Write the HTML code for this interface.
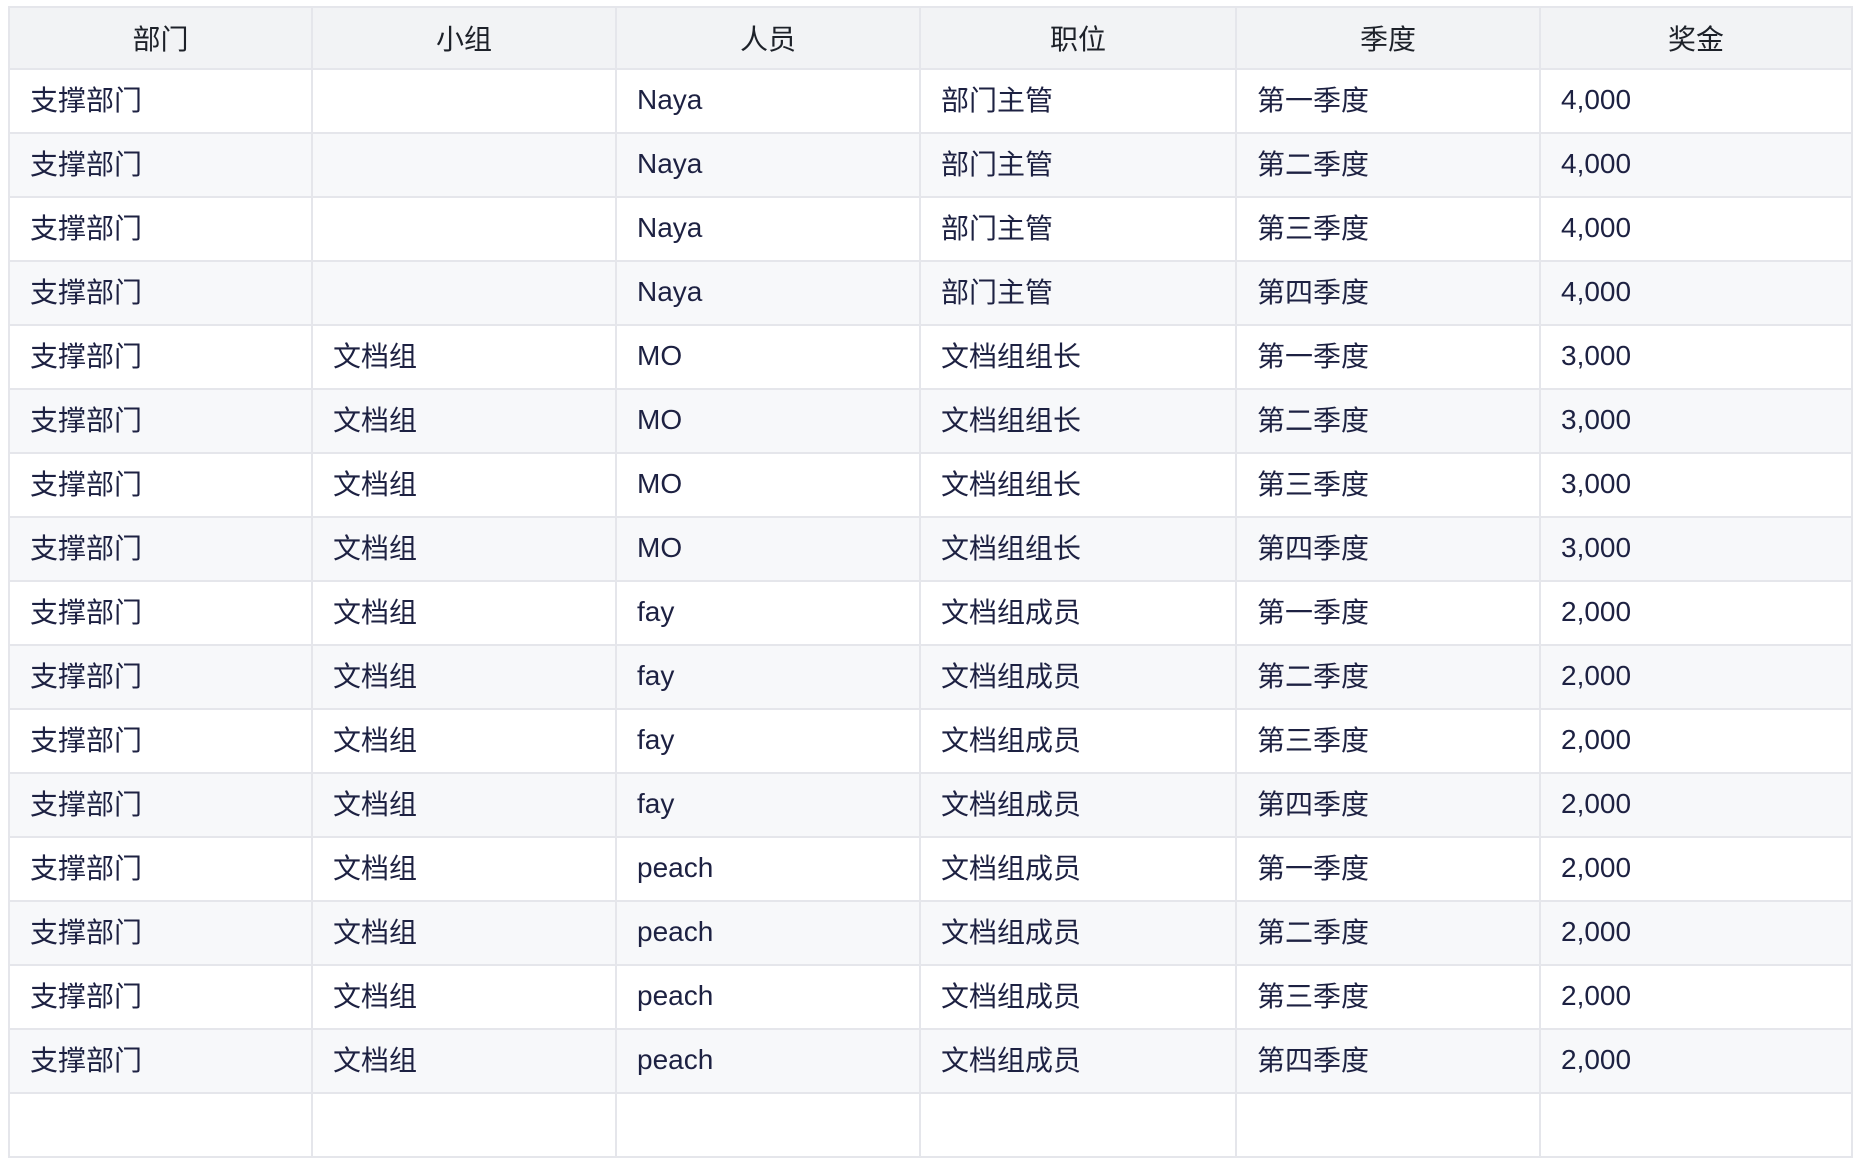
<!DOCTYPE html>
<html><head><meta charset="utf-8"><style>
html,body{margin:0;padding:0;background:#fff;width:1859px;height:1100px;overflow:hidden}
table{position:absolute;left:8px;top:6px;border-collapse:collapse;table-layout:fixed;width:1843px;
font-family:"Liberation Sans","Noto Sans CJK SC",sans-serif;font-size:28px;color:#1d2142}
td,th{border:2px solid #e5e6eb;padding:0 0 0 20px;height:62px;text-align:left;font-weight:normal;white-space:nowrap;overflow:hidden;line-height:1}
th{background:#f2f3f5;text-align:center;padding:3px 0 0 0;height:57px;color:#1d2129}
td.l{padding-top:0;padding-bottom:3px;height:59px;font-size:28px}
tr:nth-child(even) td{background:#f7f8fa}
tr:nth-child(odd) td{background:#fff}
</style></head><body>
<table>
<colgroup><col style="width:303px"><col style="width:304px"><col style="width:304px"><col style="width:316px"><col style="width:304px"><col style="width:312px"></colgroup>
<thead><tr><th>部门</th><th>小组</th><th>人员</th><th>职位</th><th>季度</th><th>奖金</th></tr></thead>
<tbody>
<tr><td>支撑部门</td><td></td><td class="l">Naya</td><td>部门主管</td><td>第一季度</td><td class="l">4,000</td></tr>
<tr><td>支撑部门</td><td></td><td class="l">Naya</td><td>部门主管</td><td>第二季度</td><td class="l">4,000</td></tr>
<tr><td>支撑部门</td><td></td><td class="l">Naya</td><td>部门主管</td><td>第三季度</td><td class="l">4,000</td></tr>
<tr><td>支撑部门</td><td></td><td class="l">Naya</td><td>部门主管</td><td>第四季度</td><td class="l">4,000</td></tr>
<tr><td>支撑部门</td><td>文档组</td><td class="l">MO</td><td>文档组组长</td><td>第一季度</td><td class="l">3,000</td></tr>
<tr><td>支撑部门</td><td>文档组</td><td class="l">MO</td><td>文档组组长</td><td>第二季度</td><td class="l">3,000</td></tr>
<tr><td>支撑部门</td><td>文档组</td><td class="l">MO</td><td>文档组组长</td><td>第三季度</td><td class="l">3,000</td></tr>
<tr><td>支撑部门</td><td>文档组</td><td class="l">MO</td><td>文档组组长</td><td>第四季度</td><td class="l">3,000</td></tr>
<tr><td>支撑部门</td><td>文档组</td><td class="l">fay</td><td>文档组成员</td><td>第一季度</td><td class="l">2,000</td></tr>
<tr><td>支撑部门</td><td>文档组</td><td class="l">fay</td><td>文档组成员</td><td>第二季度</td><td class="l">2,000</td></tr>
<tr><td>支撑部门</td><td>文档组</td><td class="l">fay</td><td>文档组成员</td><td>第三季度</td><td class="l">2,000</td></tr>
<tr><td>支撑部门</td><td>文档组</td><td class="l">fay</td><td>文档组成员</td><td>第四季度</td><td class="l">2,000</td></tr>
<tr><td>支撑部门</td><td>文档组</td><td class="l">peach</td><td>文档组成员</td><td>第一季度</td><td class="l">2,000</td></tr>
<tr><td>支撑部门</td><td>文档组</td><td class="l">peach</td><td>文档组成员</td><td>第二季度</td><td class="l">2,000</td></tr>
<tr><td>支撑部门</td><td>文档组</td><td class="l">peach</td><td>文档组成员</td><td>第三季度</td><td class="l">2,000</td></tr>
<tr><td>支撑部门</td><td>文档组</td><td class="l">peach</td><td>文档组成员</td><td>第四季度</td><td class="l">2,000</td></tr>
<tr><td>&nbsp;</td><td></td><td></td><td></td><td></td><td></td></tr>
</tbody></table>
</body></html>
